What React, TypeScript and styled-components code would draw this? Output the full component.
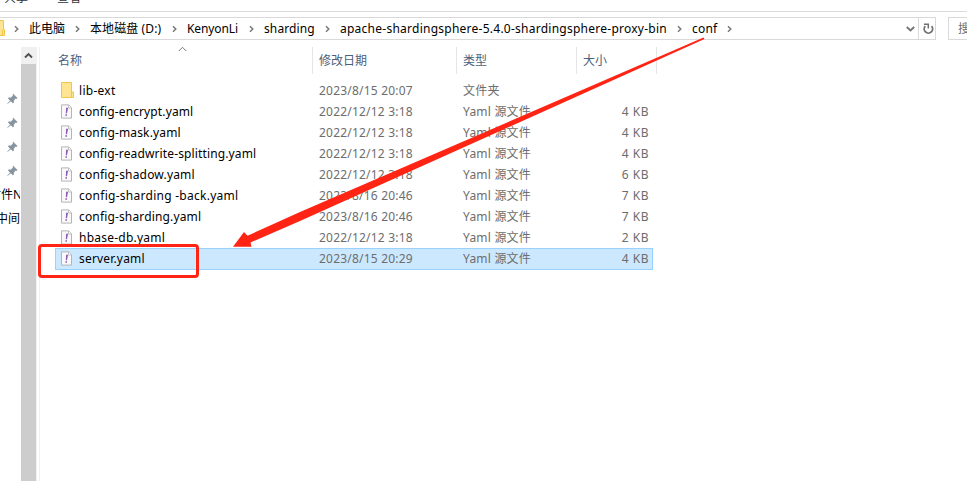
import React from 'react';
import styled, { createGlobalStyle } from 'styled-components';

const GlobalStyle = createGlobalStyle`
  * { box-sizing: border-box; }
  body { margin: 0; background: #fff; overflow: hidden; }
`;

const Window = styled.div`
  position: relative;
  display: flex;
  flex-direction: column;
  width: 967px;
  height: 481px;
  overflow: hidden;
  background: #fff;
  color: #000;
  font: 12px/16px 'Noto Sans', 'Noto Sans CJK SC', sans-serif;
  white-space: nowrap;
`;

const Ribbon = styled.div`
  display: flex;
  gap: 29px;
  height: 12px;
  padding-left: 4px;
  border-bottom: 1px solid #dadbdc;
  overflow: hidden;
  color: #333;
`;

const RibbonTab = styled.span`
  height: 16px;
  margin-top: -10px;
`;

const AddressRow = styled.div`
  display: flex;
  gap: 12px;
  height: 23px;
  margin-top: 5px;
`;

const AddressBox = styled.div`
  display: flex;
  width: 936px;
  border: 1px solid #d9d9d9;
  border-left: 0;
`;

const AddressPath = styled.div`
  display: flex;
  align-items: center;
  width: 918px;
`;

const FolderStub = styled.svg`
  width: 6px;
  height: 17px;
`;

const Crumb = styled.span<{ $width: number; $spacing?: number }>`
  display: flex;
  align-items: center;
  width: ${p => p.$width}px;
  padding-right: 10px;
  justify-content: space-between;
  letter-spacing: ${p => p.$spacing ?? 0}px;
`;

const FirstChevron = styled.span`
  display: flex;
  width: 23px;
  padding-left: 8px;
`;

const RefreshButton = styled.div`
  display: flex;
  align-items: center;
  width: 17px;
  padding-left: 4px;
  border-left: 1px solid #d9d9d9;
`;

const DropDown = styled.span`
  display: flex;
  margin-left: auto;
  padding: 1px 3px 0 0;
`;

const SearchBox = styled.div`
  width: 30px;
  padding: 3px 0 0 9px;
  border: 1px solid #d9d9d9;
  border-right: 0;
  color: #6d6d6d;
`;

const Body = styled.div`
  display: flex;
  flex: 1;
  margin-top: 7px;
`;

const Sidebar = styled.div`
  width: 20px;
  margin-right: 1px;
  padding-top: 40px;
  overflow: hidden;
`;

const SideItem = styled.div<{ $shift?: number }>`
  display: flex;
  align-items: center;
  height: 24px;
  margin-left: ${p => p.$shift ?? 0}px;
`;

const Scrollbar = styled.div`
  display: flex;
  flex-direction: column;
  width: 16px;
  border-right: 1px solid #f0f0f0;
`;

const ScrollArrow = styled.div`
  display: flex;
  align-items: center;
  justify-content: center;
  height: 17px;
  background: #f0f0f0;
`;

const ScrollThumb = styled.div`
  flex: 1;
  width: 15px;
  background: #cdcdcd;
`;

const Content = styled.div`
  flex: 1;
  margin-left: 2px;
  border-left: 1px solid #f0f0f0;
`;

const Header = styled.div`
  display: grid;
  grid-template-columns: 273px 144px 120px 80px;
  height: 27px;
`;

const HeaderCell = styled.div<{ $first?: boolean }>`
  position: relative;
  padding: 6px 0 0 ${p => (p.$first ? 18 : 6)}px;
  border-right: 1px solid #e5e5e5;
  color: #4c607a;
`;

const SortMark = styled.svg`
  position: absolute;
  left: 138px;
  top: -1px;
`;

const Rows = styled.div`
  padding: 6px 0 0 15px;
`;

const Row = styled.div<{ $selected?: boolean }>`
  display: grid;
  grid-template-columns: 23px 240px 144px 120px 66px;
  align-items: center;
  width: 598px;
  height: 22px;
  margin-bottom: -1px;
  border: 1px solid ${p => (p.$selected ? '#99d1ff' : 'transparent')};
  background: ${p => (p.$selected ? '#cce8ff' : 'transparent')};
`;

const IconCell = styled.span`
  display: flex;
  padding: 0 0 1px 5px;
`;

const FileName = styled.span<{ $spacing?: number }>`
  letter-spacing: ${p => p.$spacing ?? 0}px;
`;

const Detail = styled.span`
  color: #6d6d6d;
  letter-spacing: 0.21px;
`;

const Size = styled.span`
  color: #6d6d6d;
  text-align: right;
  letter-spacing: 0.5px;
`;

const Highlight = styled.div`
  position: absolute;
  left: 38px;
  top: 244px;
  width: 161px;
  height: 34px;
  border: 3px solid #ff2414;
  border-radius: 4px;
`;

const ArrowLayer = styled.svg`
  position: absolute;
  left: 0;
  top: 0;
  pointer-events: none;
`;

const Chevron = () => (
  <svg width="5" height="8" viewBox="0 0 5 8">
    <path d="M1 1.2 L3.8 4 L1 6.8" fill="none" stroke="#777" strokeWidth="1.5" />
  </svg>
);

const FolderIcon = () => (
  <svg width="14" height="17" viewBox="0 0 14 17">
    <path d="M.5 .5H10.5V10H12.5V15.5H.5Z" fill="#ffe591" stroke="#efc649" />
    <path d="M10.5 10V15" fill="none" stroke="#efc649" />
  </svg>
);

const FileIcon = () => (
  <svg width="12" height="15" viewBox="0 0 12 15">
    <path d="M.5 .9H7.7L10.5 3.7V14.1H.5Z" fill="#f9f9fa" stroke="#b4b4b8" />
    <path d="M7.5 1V4H10.5" fill="#fff" stroke="#b4b4b8" strokeWidth=".8" />
    <path d="M5.1 3.8H7.1L6 9.2H4.8Z M4.4 10.2H6V11.8H4.4Z" fill="#8e5bb5" />
  </svg>
);

const PinIcon = () => (
  <svg width="11" height="12" viewBox="0 0 11 12">
    <path
      d="M6.2 .8L10.5 5L9.4 5.9L8.7 5.5L6.9 7.5L6.8 9.8L5.9 10.3L3.8 8.2L.5 11.1L.2 10.8L3 7.4L1 5.4L1.6 4.6L3.9 4.4L6 2.5L5.6 1.6Z"
      fill="#8795a0"
    />
  </svg>
);

const crumbs = [
  { text: '此电脑', width: 61 },
  { text: '本地磁盘 (D:)', width: 97, spacing: 0.1 },
  { text: 'KenyonLi', width: 77, spacing: -0.1 },
  { text: 'sharding', width: 76, spacing: 0.12 },
  { text: 'apache-shardingsphere-5.4.0-shardingsphere-proxy-bin', width: 352, spacing: 0.25 },
  { text: 'conf', width: 50, spacing: 0.2 },
];

const files = [
  { name: 'lib-ext', date: '2023/8/15 20:07', size: '', spacing: 0.28 },
  { name: 'config-encrypt.yaml', date: '2022/12/12 3:18', size: '4 KB', spacing: 0.12 },
  { name: 'config-mask.yaml', date: '2022/12/12 3:18', size: '4 KB', spacing: 0.15 },
  { name: 'config-readwrite-splitting.yaml', date: '2022/12/12 3:18', size: '4 KB', spacing: 0.13 },
  { name: 'config-shadow.yaml', date: '2022/12/12 3:18', size: '6 KB', spacing: 0.18 },
  { name: 'config-sharding -back.yaml', date: '2023/8/16 20:46', size: '7 KB', spacing: 0.27 },
  { name: 'config-sharding.yaml', date: '2023/8/16 20:46', size: '7 KB', spacing: 0.15 },
  { name: 'hbase-db.yaml', date: '2022/12/12 3:18', size: '2 KB', spacing: 0.23 },
  { name: 'server.yaml', date: '2023/8/15 20:29', size: '4 KB', spacing: 0.18 },
];

export default function App() {
  return (
    <Window>
      <GlobalStyle />
      <Ribbon>
        <RibbonTab>共享</RibbonTab>
        <RibbonTab>查看</RibbonTab>
      </Ribbon>
      <AddressRow>
        <AddressBox>
          <AddressPath>
            <FolderStub viewBox="0 0 6 17">
              <path d="M-1 .5H3.5V9.5H4.5V15.5H-1Z" fill="#ffe591" stroke="#efc649" />
              <path d="M2.5 15V10" stroke="#efc649" />
            </FolderStub>
            <FirstChevron><Chevron /></FirstChevron>
            {crumbs.map(c => (
              <Crumb key={c.text} $width={c.width} $spacing={c.spacing}>{c.text}<Chevron /></Crumb>
            ))}
            <DropDown>
              <svg width="9" height="6" viewBox="0 0 9 6">
                <path d="M.8 .9L4.5 4.4L8.2 .9" fill="none" stroke="#777" strokeWidth="2" />
              </svg>
            </DropDown>
          </AddressPath>
          <RefreshButton>
            <svg width="11" height="12" viewBox="0 0 11 12">
              <path d="M2.2 3.2A4.2 4.2 0 1 0 8.6 3.2" fill="none" stroke="#707070" strokeWidth="1.8" />
              <path d="M1 1.2H5.3V5.4" fill="none" stroke="#707070" strokeWidth="1.5" />
            </svg>
          </RefreshButton>
        </AddressBox>
        <SearchBox>搜索</SearchBox>
      </AddressRow>
      <Body>
        <Sidebar>
          {[0, 1, 2, 3].map(i => (
            <SideItem key={i} $shift={7}><PinIcon /></SideItem>
          ))}
          <SideItem $shift={-11}>附件N</SideItem>
          <SideItem $shift={-4}>中间</SideItem>
        </Sidebar>
        <Scrollbar>
          <ScrollArrow>
            <svg width="9" height="7" viewBox="0 0 9 7">
              <path d="M1 5.5L4.5 2L8 5.5" fill="none" stroke="#505050" strokeWidth="1.9" />
            </svg>
          </ScrollArrow>
          <ScrollThumb />
        </Scrollbar>
        <Content>
          <Header>
            <HeaderCell $first>
              名称
              <SortMark width="9" height="6" viewBox="0 0 9 6">
                <path d="M.8 5L4.5 1.3L8.2 5" fill="none" stroke="#777" />
              </SortMark>
            </HeaderCell>
            <HeaderCell>修改日期</HeaderCell>
            <HeaderCell>类型</HeaderCell>
            <HeaderCell>大小</HeaderCell>
          </Header>
          <Rows>
            {files.map((f, i) => (
              <Row key={f.name} $selected={i === files.length - 1}>
                <IconCell>{i === 0 ? <FolderIcon /> : <FileIcon />}</IconCell>
                <FileName $spacing={f.spacing}>{f.name}</FileName>
                <Detail>{f.date}</Detail>
                <Detail>{i === 0 ? '文件夹' : 'Yaml 源文件'}</Detail>
                <Size>{f.size}</Size>
              </Row>
            ))}
          </Rows>
        </Content>
      </Body>
      <Highlight />
      <ArrowLayer width="967" height="481" viewBox="0 0 967 481">
        <path
          d="M703.5 37.5L704.5 39L300 221L250.5 242.5L251.5 246.7L233 246.7L244 232L247.5 235.8L300 212Z"
          fill="#ff2414"
        />
      </ArrowLayer>
    </Window>
  );
}
